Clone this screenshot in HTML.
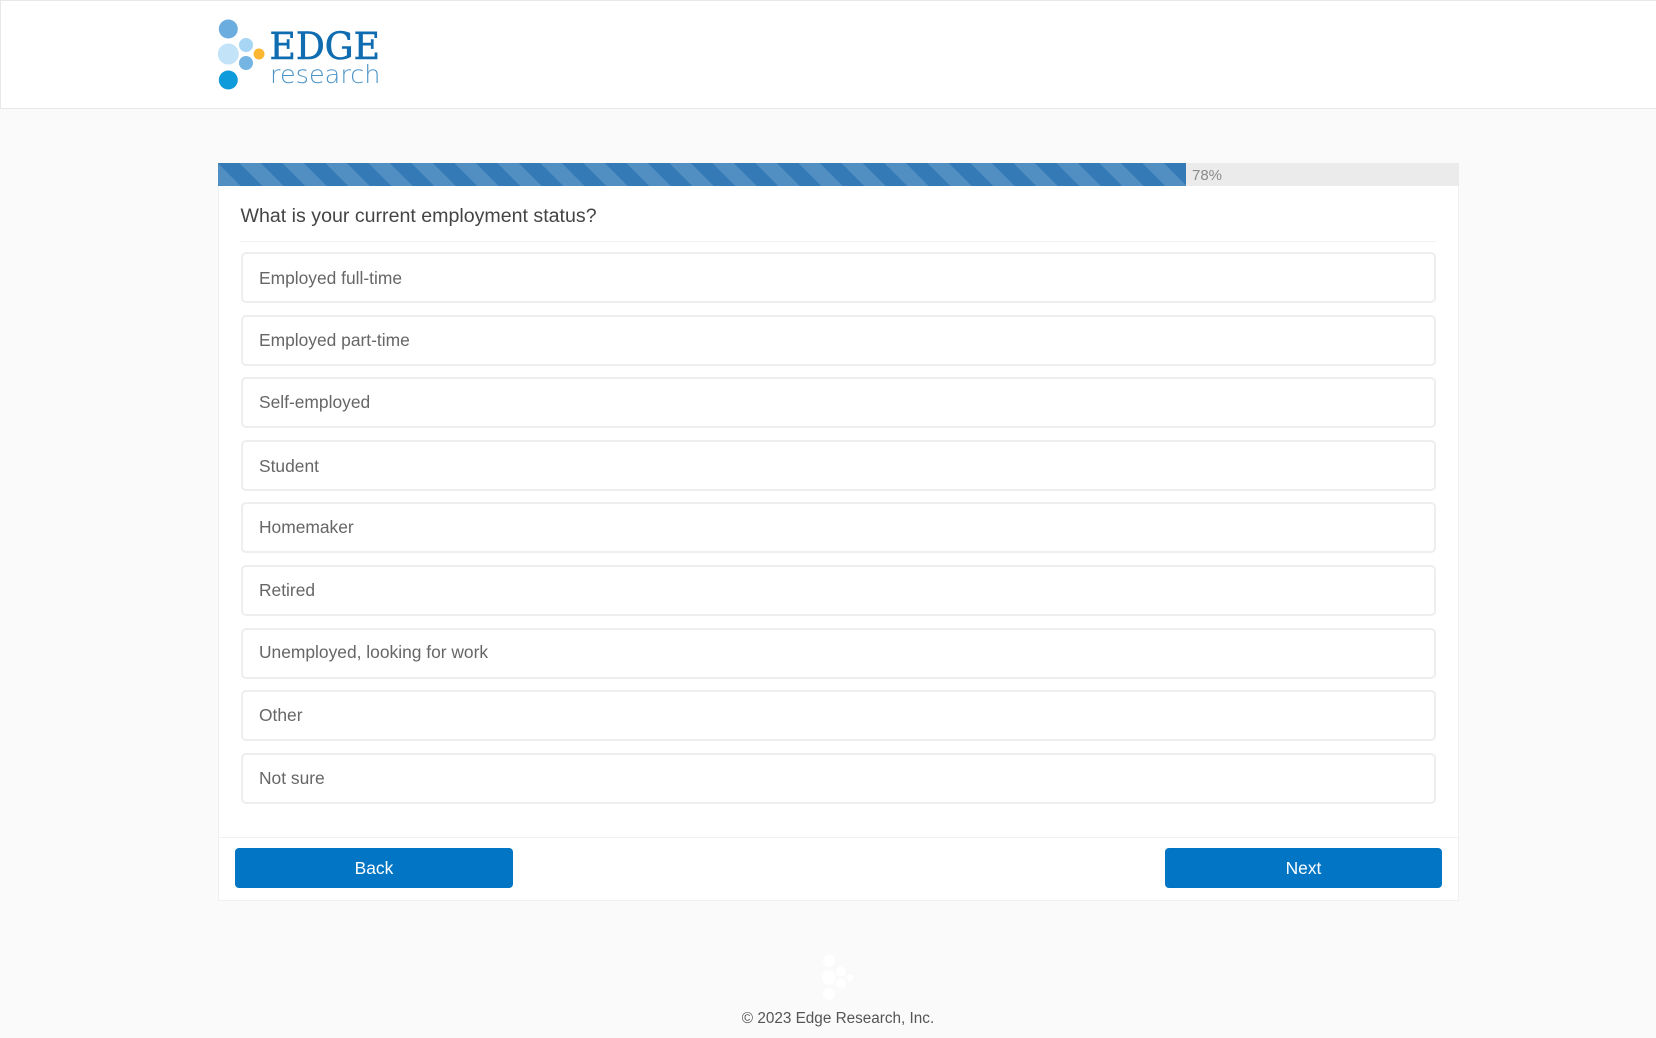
<!DOCTYPE html>
<html lang="en"><head><meta charset="utf-8"><title>Edge Research Survey</title>
<style>
html,body{margin:0;padding:0}
body{width:1656px;height:1038px;background:#fafafa;position:relative;overflow:hidden;font-family:"Liberation Sans",Arial,sans-serif;color:#555}
.abs{position:absolute}
#hdr{left:0;top:0;width:1655px;height:107px;background:#fff;border:1px solid #e8e8e8;border-right:0}
#panel{left:218px;top:163px;width:1239px;height:736px;background:#fff;border:1px solid #f0f0f0}
#track{left:218px;top:163px;width:1241px;height:23px;background:#ebebeb}
#bar{left:218px;top:163px;width:968px;height:23px;background-color:#337ab7;background-image:linear-gradient(45deg,rgba(255,255,255,.15) 25%,transparent 25%,transparent 50%,rgba(255,255,255,.15) 50%,rgba(255,255,255,.15) 75%,transparent 75%,transparent);background-size:43px 43px;background-position:21.5px 0}
#pct{left:1192px;top:163.5px;line-height:24px;font-size:15px;color:#8a8a8a}
#q{left:240.5px;top:201.5px;line-height:28px;font-size:19.6px;color:#444;white-space:nowrap}
#hr{left:240px;top:240.5px;width:1196px;height:1px;background:#f2f2f2}
.o{position:absolute;left:240.5px;width:1191.5px;height:47px;border:2px solid #eceef0;border-radius:5px;background:#fff;font-size:17.4px;line-height:47px;color:#666}
.o span{position:relative;left:16.5px}
#fl{left:219px;top:837px;width:1239px;height:1px;background:#f2f2f2}
.b{position:absolute;top:848px;height:40px;line-height:40px;background:#0275c4;color:#fff;border-radius:4px;text-align:center;font-size:17.4px}
#ft{left:638px;width:400px;top:1008.5px;line-height:20px;text-align:center;font-size:15.3px;color:#555}
</style></head><body>
<div id="hdr" class="abs"></div>
<svg class="abs" style="left:200px;top:0" width="220" height="108" viewBox="0 0 220 108">
<circle cx="28.3" cy="29" r="9.5" fill="#6badde"/>
<circle cx="28.3" cy="54" r="10.5" fill="#c2e3f8"/>
<circle cx="28.3" cy="80" r="9.5" fill="#0e9bdc"/>
<circle cx="46" cy="45" r="7" fill="#a6d6f3"/>
<circle cx="46" cy="63" r="7" fill="#74b5e3"/>
<circle cx="59" cy="54" r="5.5" fill="#fbb731"/>
<text x="69.5" y="59" font-family="DejaVu Serif" font-size="37" fill="#0f6cb0" stroke="#0f6cb0" stroke-width=".6" textLength="110.5" lengthAdjust="spacingAndGlyphs">EDGE</text>
<text x="70" y="83" font-family="DejaVu Sans" font-weight="200" font-size="25" fill="#4a93c7" textLength="110.5" lengthAdjust="spacingAndGlyphs">research</text>
</svg>
<div id="panel" class="abs"></div>
<div id="track" class="abs"></div>
<div id="bar" class="abs"></div>
<div id="pct" class="abs">78%</div>
<div id="q" class="abs">What is your current employment status?</div>
<div id="hr" class="abs"></div>
<div class="o" style="top:252px"><span style="top:1px">Employed full-time</span></div>
<div class="o" style="top:315px"><span>Employed part-time</span></div>
<div class="o" style="top:377px"><span>Self-employed</span></div>
<div class="o" style="top:440px"><span style="top:1px">Student</span></div>
<div class="o" style="top:502px"><span>Homemaker</span></div>
<div class="o" style="top:565px"><span>Retired</span></div>
<div class="o" style="top:628px"><span style="top:-1px">Unemployed, looking for work</span></div>
<div class="o" style="top:690px"><span>Other</span></div>
<div class="o" style="top:753px"><span>Not sure</span></div>
<div id="fl" class="abs"></div>
<div class="b" style="left:235px;width:278px">Back</div>
<div class="b" style="left:1165px;width:277px">Next</div>
<svg class="abs" style="left:810px;top:945px" width="50" height="60" viewBox="0 0 50 60">
<g fill="#fff"><circle cx="19" cy="15.7" r="6"/><circle cx="19" cy="32.7" r="7"/><circle cx="19" cy="49" r="6"/><circle cx="31" cy="26.7" r="5"/><circle cx="31" cy="38.7" r="5"/><circle cx="40" cy="32.7" r="3.5"/></g>
</svg>
<div id="ft" class="abs">© 2023 Edge Research, Inc.</div>
</body></html>
